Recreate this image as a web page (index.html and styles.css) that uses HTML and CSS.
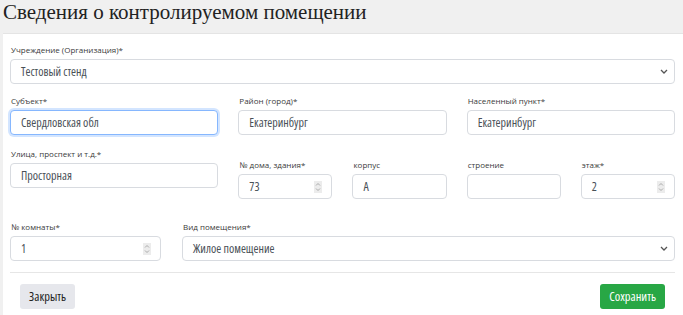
FILE: index.html
```html
<!DOCTYPE html>
<html lang="ru">
<head>
  <meta charset="UTF-8">
  <title>Сведения о контролируемом помещении</title>
  <link rel="stylesheet" href="styles.css">
</head>
<body>
  <h1 class="page-title">Сведения о контролируемом помещении</h1>
  <div class="card">
    <div class="group">
      <label class="label">Учреждение (Организация)*</label>
      <div class="field select">
        <span>Тестовый стенд</span>
        <svg class="chevron" width="8" height="5" viewBox="0 0 8 5"><path d="M1 1l3 3 3-3" fill="none" stroke="#555" stroke-width="1.3"/></svg>
      </div>
    </div>

    <div class="grid six">
      <div class="group span2">
        <label class="label">Субъект*</label>
        <div class="field focused"><span>Свердловская обл</span></div>
      </div>
      <div class="group span2">
        <label class="label">Район (город)*</label>
        <div class="field"><span>Екатеринбург</span></div>
      </div>
      <div class="group span2">
        <label class="label">Населенный пункт*</label>
        <div class="field"><span>Екатеринбург</span></div>
      </div>

      <div class="group span2">
        <label class="label">Улица, проспект и т.д.*</label>
        <div class="field"><span>Просторная</span></div>
      </div>
      <div class="group lower">
        <label class="label">№ дома, здания*</label>
        <div class="field number"><span>73</span>
          <svg class="spin" width="8" height="12" viewBox="0 0 8 12"><rect width="8" height="12" fill="#ececec"/><path d="M2 4.5l2-2 2 2M2 7.5l2 2 2-2" fill="none" stroke="#999" stroke-width="0.8"/></svg>
        </div>
      </div>
      <div class="group lower">
        <label class="label">корпус</label>
        <div class="field"><span>А</span></div>
      </div>
      <div class="group lower">
        <label class="label">строение</label>
        <div class="field"><span></span></div>
      </div>
      <div class="group lower">
        <label class="label">этаж*</label>
        <div class="field number"><span>2</span>
          <svg class="spin" width="8" height="12" viewBox="0 0 8 12"><rect width="8" height="12" fill="#ececec"/><path d="M2 4.5l2-2 2 2M2 7.5l2 2 2-2" fill="none" stroke="#999" stroke-width="0.8"/></svg>
        </div>
      </div>
    </div>

    <div class="grid room">
      <div class="group">
        <label class="label">№ комнаты*</label>
        <div class="field number"><span>1</span>
          <svg class="spin" width="8" height="12" viewBox="0 0 8 12"><rect width="8" height="12" fill="#ececec"/><path d="M2 4.5l2-2 2 2M2 7.5l2 2 2-2" fill="none" stroke="#999" stroke-width="0.8"/></svg>
        </div>
      </div>
      <div class="group">
        <label class="label">Вид помещения*</label>
        <div class="field select">
          <span>Жилое помещение</span>
          <svg class="chevron" width="8" height="5" viewBox="0 0 8 5"><path d="M1 1l3 3 3-3" fill="none" stroke="#555" stroke-width="1.3"/></svg>
        </div>
      </div>
    </div>

    <div class="footer">
      <button class="btn btn-light">Закрыть</button>
      <button class="btn btn-green">Сохранить</button>
    </div>
  </div>
</body>
</html>
```

FILE: styles.css
```css
body {
  margin: 0;
  background: #f0f0f0;
  font-family: "Open Sans", "Noto Sans", sans-serif;
  color: #495057;
}
.page-title {
  margin: 0;
  padding: 0 0 0 3px;
  height: 33px;
  font-family: "Liberation Serif", serif;
  font-weight: normal;
  font-size: 21px;
  line-height: 25px;
  color: #222;
}
.card {
  background: #fff;
  margin-left: 3px;
  padding: 10px 8px 0 7px;
  min-height: 282px;
  box-sizing: border-box;
  border-top: 1px solid #e4e4e4;
}
.label {
  display: block;
  font-size: 8px;
  font-stretch: 90%;
  line-height: 12px;
  color: #3a3a3a;
  margin: 0 0 3px 1px;
}
.group {
  display: flex;
  flex-direction: column;
}
.field {
  height: 25px;
  box-sizing: border-box;
  border: 1px solid #d8dbe0;
  border-radius: 4px;
  padding: 0 10px;
  display: flex;
  align-items: center;
  justify-content: space-between;
  font-size: 12px;
  font-stretch: 82%;
  font-weight: 370;
  color: #495057;
  background: #fff;
}
.field.focused {
  border-color: #86b7fe;
  box-shadow: 0 0 0 2px rgba(13, 110, 253, 0.18);
}
.chevron {
  margin-right: -4px;
}
.spin {
  margin-right: -1px;
}
.grid {
  display: grid;
  column-gap: 20px;
}
.six {
  grid-template-columns: repeat(6, 1fr);
  margin-top: 11px;
  row-gap: 13px;
}
.span2 {
  grid-column: span 2;
}
.lower {
  padding-top: 11px;
}
.room {
  grid-template-columns: 151px 1fr;
  column-gap: 21px;
  margin-top: 22px;
}
.footer {
  display: flex;
  justify-content: space-between;
  margin-top: 11px;
  border-top: 1px solid #e6e6e6;
  padding: 11px 10px 8px 10px;
}
.btn {
  height: 25px;
  border: none;
  border-radius: 3px;
  font-family: "Open Sans", sans-serif;
  font-stretch: 84%;
  font-size: 12.5px;
  padding: 0 9px;
}
.btn-light {
  background: #e6e7ec;
  color: #222;
}
.btn-green {
  background: #28a745;
  color: #fff;
}
```
